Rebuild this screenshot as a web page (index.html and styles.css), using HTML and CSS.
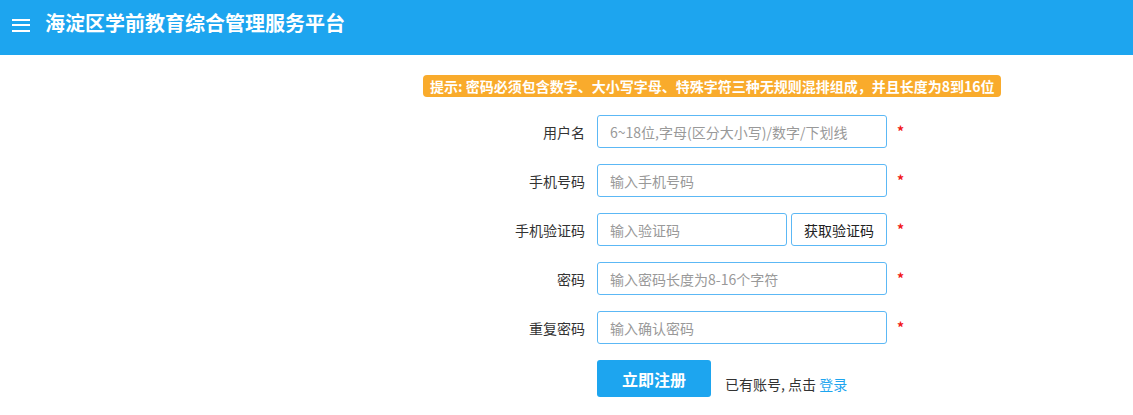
FILE: index.html
```html
<!DOCTYPE html>
<html lang="zh">
<head>
<meta charset="utf-8">
<title>海淀区学前教育综合管理服务平台</title>
<link rel="stylesheet" href="styles.css">
</head>
<body>
<header class="topbar">
  <span class="menu-icon"><i></i><i></i><i></i></span>
  <h1 class="title">海淀区学前教育综合管理服务平台</h1>
</header>
<main class="content">
  <div class="tip">提示: 密码必须包含数字、大小写字母、特殊字符三种无规则混排组成，并且长度为8到16位</div>
  <form class="form">
    <div class="row">
      <label class="label">用户名</label>
      <input class="input" type="text" placeholder="6~18位,字母(区分大小写)/数字/下划线">
      <span class="req">*</span>
    </div>
    <div class="row">
      <label class="label">手机号码</label>
      <input class="input" type="text" placeholder="输入手机号码">
      <span class="req">*</span>
    </div>
    <div class="row">
      <label class="label">手机验证码</label>
      <div class="code-group">
        <input class="input input-code" type="text" placeholder="输入验证码">
        <button class="code-btn" type="button">获取验证码</button>
      </div>
      <span class="req">*</span>
    </div>
    <div class="row">
      <label class="label">密码</label>
      <input class="input" type="password" placeholder="输入密码长度为8-16个字符">
      <span class="req">*</span>
    </div>
    <div class="row">
      <label class="label">重复密码</label>
      <input class="input" type="password" placeholder="输入确认密码">
      <span class="req">*</span>
    </div>
    <div class="row actions">
      <span class="label"></span>
      <button class="submit" type="button">立即注册</button>
      <span class="login-hint">已有账号, 点击 <a class="login-link" href="#">登录</a></span>
    </div>
  </form>
</main>
</body>
</html>
```

FILE: styles.css
```css
* { box-sizing: border-box; }
html, body { margin: 0; padding: 0; background: #fff; }
body {
  font-family: "Noto Sans CJK SC", "Noto Sans", sans-serif;
  color: #333;
  font-size: 14px;
}
.topbar {
  height: 55px;
  background: #1da5ef;
  display: flex;
  align-items: center;
  padding-left: 12px;
  padding-bottom: 10px;
}
.menu-icon {
  display: flex;
  flex-direction: column;
  justify-content: space-between;
  width: 18px;
  height: 13px;
  margin-right: 15px;
  margin-top: 5px;
}
.menu-icon i {
  display: block;
  height: 2px;
  background: #fff;
}
.title {
  margin: 0;
  color: #fff;
  font-size: 20px;
  font-weight: 700;
  line-height: 24px;
}
.content {
  padding-top: 20px;
}
.tip {
  margin-left: 423px;
  display: block;
  width: 578px;
  height: 22px;
  line-height: 22px;
  background: #f9ab2c;
  color: #fff;
  font-weight: 700;
  font-size: 14px;
  border-radius: 4px;
  padding: 0 7px;
  white-space: nowrap;
  overflow: hidden;
}
.form {
  margin-top: 18px;
  display: flex;
  flex-direction: column;
  gap: 16px;
}
.row {
  display: flex;
  align-items: center;
  height: 33px;
}
.label {
  width: 100px;
  margin-left: 485px;
  margin-right: 12px;
  text-align: right;
  color: #333;
  font-size: 14px;
}
.input {
  width: 290px;
  height: 33px;
  border: 1px solid #5cb8f5;
  border-radius: 3px;
  padding: 0 12px;
  font-family: inherit;
  font-size: 14px;
  color: #333;
  outline: none;
}
.input::placeholder { color: #999; }
.code-group {
  display: flex;
  gap: 4px;
  width: 290px;
}
.input-code { width: 190px; }
.code-btn {
  width: 96px;
  height: 33px;
  border: 1px solid #5cb8f5;
  border-radius: 3px;
  background: #fff;
  font-family: inherit;
  font-size: 14px;
  color: #222;
  padding: 0;
}
.req {
  color: #f21818;
  margin-left: 10px;
  font-size: 14px;
  font-weight: 700;
  line-height: 1;
  padding-bottom: 1px;
}
.actions {
  height: 37px;
  align-items: flex-end;
}
.submit {
  width: 114px;
  height: 37px;
  background: #1da5ef;
  border: none;
  border-radius: 3px;
  color: #fff;
  font-family: inherit;
  font-size: 16px;
  font-weight: 700;
  padding: 0;
}
.login-hint {
  margin-left: 14px;
  color: #333;
  font-size: 14px;
  line-height: 20px;
  margin-bottom: 3px;
}
.login-link {
  color: #1da5ef;
  text-decoration: none;
}
```
